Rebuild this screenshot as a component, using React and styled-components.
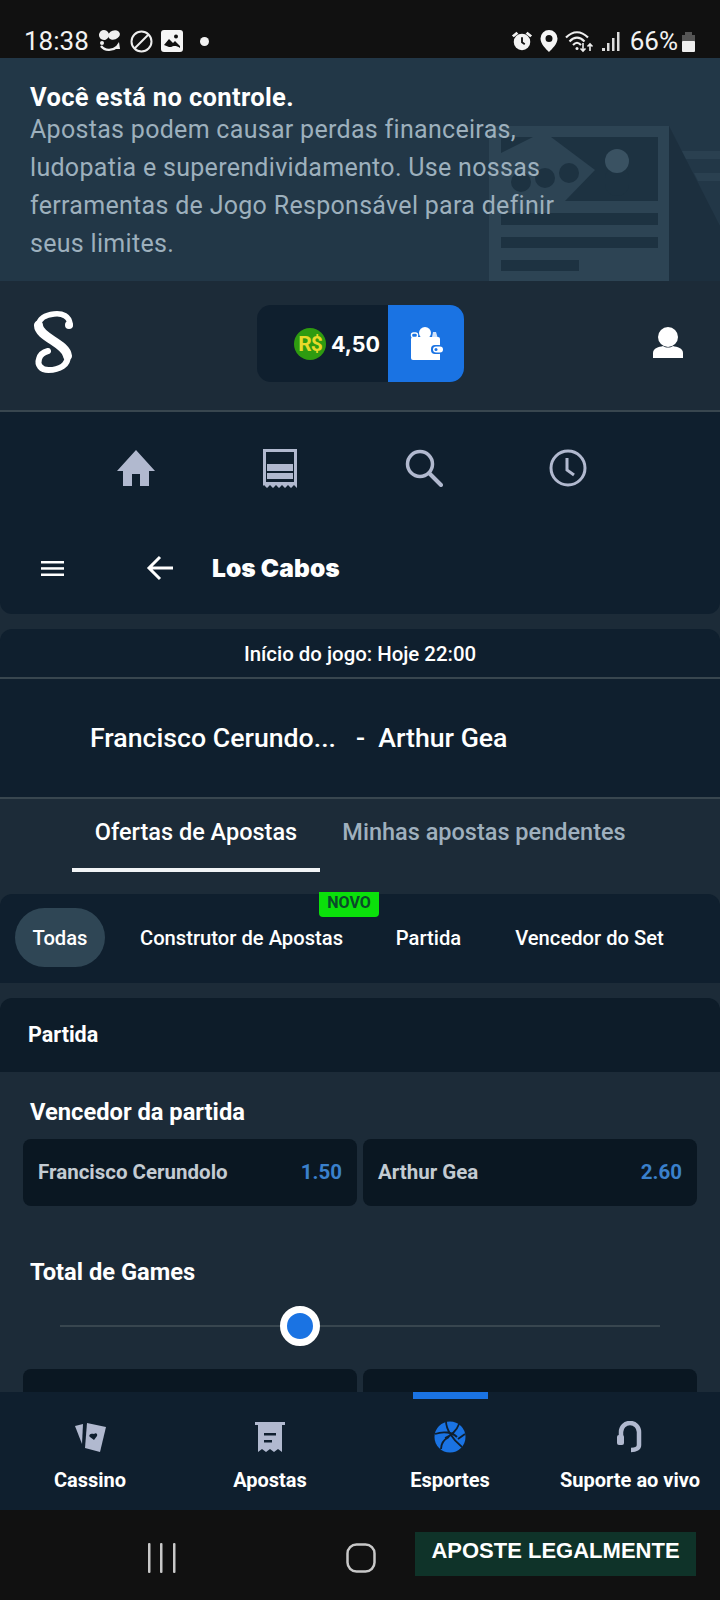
import React from "react";
import styled, { createGlobalStyle } from "styled-components";

const Global = createGlobalStyle`
  html, body { margin: 0; padding: 0; background: #111; }
  * { box-sizing: border-box; }
`;
const FONT = `"Roboto", "Noto Sans", sans-serif`;
const Page = styled.div`
  width: 720px; height: 1600px; overflow: hidden; display: flex; flex-direction: column;
  background: #1c2b38; font-family: ${FONT}; color: #fff;
`;
const StatusBar = styled.div`
  height: 58px; flex: none; background: #111; display: flex; align-items: center; justify-content: space-between;
  padding: 24px 24px 0 24px; font-family: "Roboto", sans-serif; font-size: 26px; color: #f2f2f2;
`;
const StatusGroup = styled.div`
  display: flex; align-items: center; gap: ${p => p.$gap || 6}px;
`;
const Dot = styled.span`
  margin-left: 9px; width: 9px; height: 9px; border-radius: 50%; background: #f2f2f2;
`;
const Percent = styled.span`
  margin-left: 3px; margin-right: -3px;
`;
const Banner = styled.div`
  position: relative; height: 223px; flex: none; background: #223747; padding: 23px 30px 0; overflow: hidden;
`;
const BannerArt = styled.svg`
  position: absolute; left: 480px; top: 3px;
`;
const BannerTitle = styled.div`
  position: relative; font-size: 25.5px; font-weight: 700; line-height: 32px; letter-spacing: 0.35px;
`;
const BannerText = styled.div`
  position: relative; font-size: 25px; line-height: 38px; letter-spacing: 0.3px; color: #9db0bd; width: 600px; margin-top: -2px; white-space: pre-line;
`;
const Header = styled.div`
  height: 131px; flex: none; display: flex; align-items: flex-start; justify-content: space-between;
  padding: 24px 36px 0 34px; border-bottom: 2px solid #38464f;
`;
const LogoSlot = styled.div`
  padding-top: 6px; height: 68px;
`;
const Balance = styled.div`
  width: 207px; height: 77px; margin-left: -5px; background: #0f1f2e; border-radius: 14px; display: flex; justify-content: flex-end; overflow: hidden;
`;
const BalanceValue = styled.div`
  display: flex; align-items: center; gap: 5px; padding-right: 8px; font-family: "Inter", sans-serif; font-weight: 700; font-size: 21.5px;
`;
const WalletButton = styled.div`
  width: 76px; background: #1a73e3; display: flex; align-items: center; justify-content: center;
`;
const UserSlot = styled.div`
  padding-top: 22px;
`;
const TopNav = styled.div`
  height: 110px; flex: none; background: #0f1f2e; display: grid; grid-template-columns: repeat(4, 144px); justify-content: center; align-items: center; padding: 0 17px 0 0;
`;
const NavCell = styled.div`
  display: flex; justify-content: center; padding-top: 2px;
`;
const SubHeader = styled.div`
  height: 92px; flex: none; background: #0f1f2e; border-radius: 0 0 12px 12px; display: flex; align-items: center; padding: 0 0 0 41px;
`;
const BackSlot = styled.div`
  margin-left: 82px; width: 66px; display: flex;
`;
const SubTitle = styled.div`
  font-family: "Inter", sans-serif; font-weight: 900; font-size: 24.5px; letter-spacing: 0.1px;
`;
const MatchCard = styled.div`
  margin-top: 15px; flex: none; background: #0f1f2e; border-radius: 12px 12px 0 0; border-bottom: 2px solid #38464f;
`;
const KickOff = styled.div`
  height: 50px; padding-top: 1px; display: flex; align-items: center; justify-content: center; font-size: 20.4px; font-weight: 500; border-bottom: 2px solid #38464f;
`;
const Teams = styled.div`
  height: 118px; display: flex; align-items: center; padding-left: 90px; font-size: 26.7px; font-weight: 500; white-space: pre;
`;
const Tabs = styled.div`
  height: 95px; flex: none; display: flex; padding-left: 72px;
`;
const Tab = styled.div`
  width: ${p => p.$w}px; height: 73px; padding-top: 19px; text-align: center; font-size: 23.5px; font-weight: 500;
  color: ${p => p.$active ? "#fff" : "#9fb0be"}; border-bottom: ${p => p.$active ? "4px solid #f1f4f6" : "none"};
`;
const Filters = styled.div`
  position: relative; height: 89px; flex: none; background: #0f1f2e; border-radius: 12px 12px 0 0; display: flex; align-items: center; padding: 0 0 0 15px; font-size: 20.2px; font-weight: 500;
`;
const Chip = styled.div`
  width: ${p => p.$w}px; height: 59px; margin-top: -2px; margin-left: ${p => p.$gap || 0}px; flex: none; border-radius: 30px; background: ${p => p.$active ? "#2f4655" : "transparent"};
  display: flex; align-items: center; justify-content: center; white-space: nowrap;
`;
const Novo = styled.div`
  position: absolute; left: 319px; top: -2px; width: 60px; height: 25px; background: #0be00b; border-radius: 0 0 4px 4px; color: #0a4a2a; font-size: 16px; font-weight: 700; text-align: center; line-height: 21px;
`;
const SectionHead = styled.div`
  margin-top: 15px; height: 74px; flex: none; background: #0d1c29; border-radius: 12px 12px 0 0; display: flex; align-items: center; padding: 0 0 2px 28px; font-size: 21.5px; font-weight: 700;
`;
const Content = styled.div`
  flex: 1; min-height: 0; overflow: hidden; display: flex; flex-direction: column;
`;
const MarketTitle = styled.div`
  padding-left: 30px; margin-top: ${p => p.$top}px; height: 30px; line-height: 30px; flex: none; font-size: 23.7px; font-weight: 700;
`;
const OddsRow = styled.div`
  margin: ${p => p.$top}px 23px 0 23px; display: grid; grid-template-columns: 1fr 1fr; gap: 6px; flex: none;
`;
const OddButton = styled.div`
  height: 67px; background: #0a1722; border-radius: 8px; display: flex; align-items: center; justify-content: space-between; padding: 0 15px 2px; font-size: 20.5px; font-weight: 700; color: #c3cbd2;
`;
const Price = styled.span`
  color: #3a80cb;
`;
const Slider = styled.div`
  position: relative; margin: 19px 60px 0; height: 40px; flex: none; display: flex; align-items: center;
`;
const Track = styled.div`
  flex: 1; height: 2px; background: #38464f;
`;
const Thumb = styled.div`
  position: absolute; left: 220px; top: 0; width: 40px; height: 40px; border-radius: 50%; background: #1a73e3; border: 7px solid #fff;
`;
const BottomNav = styled.div`
  position: relative; height: 118px; flex: none; background: #0f1f2e; display: grid; grid-template-columns: repeat(4, 180px);
`;
const BottomItem = styled.div`
  position: relative; display: flex; flex-direction: column; align-items: center; padding-top: 25px; font-size: 20px; font-weight: 700;
`;
const IconBox = styled.div`
  height: 40px; display: flex; align-items: center;
`;
const BottomLabel = styled.div`
  margin-top: 11px; line-height: 24px; white-space: nowrap;
`;
const ActiveBar = styled.div`
  position: absolute; top: 0; left: 53px; width: 75px; height: 7px; background: #1a73e3;
`;
const SystemBar = styled.div`
  height: 90px; flex: none; background: #111; display: flex; align-items: flex-start; padding: 22px 24px 0 0;
`;
const SysIcons = styled.div`
  width: 391px; padding: 11px 0 0 147px; display: flex; gap: 170px; flex: none;
`;
const LegalBadge = styled.div`
  margin-left: 24px; width: 281px; height: 44px; background: #0f3329; font-family: "Liberation Sans", sans-serif; font-weight: 700; font-size: 22px; color: #fff; text-align: center; line-height: 38px; white-space: nowrap;
`;

const C = "#b1b9cf";
const Alarm = () => <svg width="22" height="24" viewBox="0 0 24 24" fill="#f2f2f2"><circle cx="12" cy="13" r="9" /><path d="M1 6l5-4 2 2-5 4zM23 6l-5-4-2 2 5 4z" /><path d="M12 8v5.500l3 2" fill="none" stroke="#111" strokeWidth="2" /></svg>;
const Pin = () => <svg width="20" height="24" viewBox="0 0 20 24"><path fill="#f5f5f5" fillRule="evenodd" d="M10 1a8.500 8.500 0 0 1 8.500 8.500C18.500 15 13 20 10 23 7 20 1.500 15 1.500 9.500A8.500 8.500 0 0 1 10 1zm0 5a3.500 3.500 0 1 0 0 7 3.500 3.500 0 0 0 0-7z" /></svg>;
const Wifi = () => <svg width="30" height="24" viewBox="0 0 30 24" fill="none" stroke="#eee" strokeWidth="2.200"><path d="M1 8.500c7-7 15-7 22 0M4.500 12.500c5-5 10-5 15 0M8 16c3-3 5-3 8 0" /><circle cx="12" cy="19.500" r="1.500" fill="#eee" stroke="none" /><path d="M18 14v8m-2.500-2.500L18 22l2.500-2.500M25 22v-7m-2.500 2.500L25 15l2.500 2.500" strokeWidth="1.600" /></svg>;
const Signal = () => <svg width="20" height="24" viewBox="0 0 20 24" fill="#ddd"><rect x="1" y="19" width="3" height="3" /><rect x="6" y="14" width="2.500" height="8" /><rect x="11" y="9" width="2.500" height="13" /><rect x="16" y="3" width="2.500" height="19" /></svg>;
const Battery = () => <svg width="15" height="24" viewBox="0 0 15 24"><path fill="#555" d="M4 3h7v3h3v8H1V6h3z" /><rect x="1" y="12" width="13" height="11" rx="1" fill="#eee" /></svg>;
const Bubbles = () => <svg width="25" height="24" viewBox="0 0 25 24" fill="#f0f0f0"><ellipse cx="7" cy="6" rx="5" ry="5" transform="rotate(25 7 6)" /><ellipse cx="17" cy="6" rx="6" ry="4.500" transform="rotate(-20 17 6)" /><circle cx="5" cy="14" r="2" /><path d="M4 17c4 5 11 5 16 1" fill="none" stroke="#f0f0f0" strokeWidth="2.400" /><path d="M22 13l1 7-6 0z" /></svg>;
const Blocked = () => <svg width="23" height="23" viewBox="0 0 23 23" fill="none" stroke="#eee" strokeWidth="2"><circle cx="11.500" cy="11.500" r="10" /><path d="M18.500 4.500l-14 14" /></svg>;
const Picture = () => <svg width="22" height="22" viewBox="0 0 22 22"><rect width="22" height="22" rx="3" fill="#f5f5f5" /><path fill="#111" d="M3 15l5-6 4 4 2-2 5 5v2c-4-3-7-2-9-1l-2 0z" /><circle cx="15" cy="6.500" r="2" fill="#111" /></svg>;

const Art = () => (
  <BannerArt width="240" height="220" viewBox="0 0 240 220">
    <path fill="#1c2f3e" d="M189 65l51 100v58H189z" />
    <path fill="#2a4050" d="M202 90h38v8h-34zM214 112h26v8h-22z" />
    <rect x="9" y="65" width="180" height="158" fill="#2d4454" />
    <rect x="21" y="76" width="157" height="64" fill="#1d3241" />
    <path fill="#2d4454" d="M21 92l32-16h18l44 33-30 31H21z" />
    <circle cx="41" cy="121" r="10" fill="#1d3241" />
    <circle cx="65" cy="117" r="10" fill="#1d3241" />
    <circle cx="89" cy="112" r="10" fill="#1d3241" />
    <rect x="125" y="105" width="24" height="30" rx="12" fill="#1d3241" />
    <circle cx="137" cy="100" r="12" fill="#3a5262" />
    <rect x="21" y="152" width="157" height="12" fill="#1d3241" />
    <rect x="21" y="176" width="157" height="11" fill="#1d3241" />
    <rect x="21" y="199" width="78" height="11" fill="#1d3241" />
  </BannerArt>
);
const Logo = () => <svg width="40" height="62" viewBox="0 0 40 62" fill="none" stroke="#fff" strokeLinecap="round"><path d="M36 14C36 5 28 2 20 3 11 4 5 8 4.500 14" strokeWidth="5.500" /><path d="M4.500 14C4 26 32 32 33.500 45" strokeWidth="9" /><path d="M33.500 45c1 9-8 14-19 14C7 59 3 54 5 48c1-4 5-7 9-8" strokeWidth="6" /><circle cx="35" cy="14" r="4" fill="#fff" stroke="none" /></svg>;
const Coin = () => <svg width="32" height="32" viewBox="0 0 32 32"><circle cx="16" cy="16" r="16" fill="#2e9b10" /><text x="16" y="23" textAnchor="middle" fontFamily="Roboto, sans-serif" fontSize="21" letterSpacing="-1" fill="#e8d92a">R$</text></svg>;
const Wallet = () => <svg width="33" height="33" viewBox="0 0 33 33" fill="#fff"><circle cx="15" cy="6" r="6" /><rect x="1.500" y="6" width="6" height="4.500" rx="2" fill="none" stroke="#fff" strokeWidth="1.400" /><path d="M23 5l3 0 1.500 5H22z" opacity=".8" /><path d="M3 10h25a2 2 0 0 1 2 2v21H3a2 2 0 0 1-2-2V12a2 2 0 0 1 2-2z" /><rect x="21" y="18" width="12" height="9" rx="4" fill="#1a73e3" /><rect x="23" y="19.500" width="10" height="6" rx="3" /><circle cx="26" cy="22.500" r="1.500" fill="#1a73e3" /></svg>;
const User = () => <svg width="32" height="31" viewBox="0 0 32 31" fill="#fff"><ellipse cx="16" cy="10" rx="10" ry="10" /><path d="M1 31v-5c0-5 6-6 10-7 3 2 7 2 10 0 4 1 10 2 10 7v5z" /></svg>;
const Home = () => <svg width="38" height="36" viewBox="0 0 38 36" fill={C}><path d="M19 0L0 21h6v15h9V24h8v12h9V21h6z" /></svg>;
const Receipt = () => <svg width="36" height="39" viewBox="0 0 36 39" fill={C}><path fillRule="evenodd" d="M1 0h34v39l-3-3-3 3-3-3-3 3-3-3-3 3-3-3-3 3-3-3-3 3-3-3-1 1zm3 3v30h28V3z" /><rect x="5" y="15" width="26" height="7" /><rect x="5" y="24" width="26" height="6" /></svg>;
const Search = () => <svg width="38" height="38" viewBox="0 0 38 38" fill="none" stroke={C} strokeWidth="3.500" strokeLinecap="round"><circle cx="15" cy="15" r="12.500" /><path d="M25 25l11 11" strokeWidth="4" /></svg>;
const Clock = () => <svg width="38" height="38" viewBox="0 0 38 38" fill="none" stroke={C} strokeWidth="3"><circle cx="19" cy="19" r="17" /><path d="M18 9v12l7 5" /></svg>;
const Menu = () => <svg width="23" height="15" viewBox="0 0 23 15" fill="#fff"><rect width="23" height="2.500" /><rect y="6.200" width="23" height="2.500" /><rect y="12.500" width="23" height="2.500" /></svg>;
const Back = () => <svg width="27" height="26" viewBox="0 0 27 26" fill="none" stroke="#fff" strokeWidth="3"><path d="M14 2L3 13l11 11M3 13h24" /></svg>;
const Cards = () => <svg width="32" height="30" viewBox="0 0 32 30" fill={C}><path d="M1 4l8-2-1 20z" /><path d="M13 1l19 4-6 25-15-4z" /><path fill="#0f1f2e" d="M20 12c2-2 4 0 3 2l-3 4-4-3c-2-2 1-4 4-3z" /></svg>;
const Ticket = () => <svg width="30" height="30" viewBox="0 0 30 30" fill={C}><rect width="30" height="3" /><path fillRule="evenodd" d="M3 3h24v27l-4-3-4 3-4-3-4 3-4-3-4 3zm6 8v2.500h12V11zm0 7v2.500h8V18z" /></svg>;
const Ball = () => <svg width="32" height="32" viewBox="0 0 32 32" fill="#1a73e3" stroke="#0f1f2e" strokeWidth="1.800"><circle cx="16" cy="16" r="15.500" stroke="none" /><path fill="none" d="M12 0c0 8 6 18 16 26M1 13c8-3 17-2 22 3M25 3c-2 6-8 12-14 14M7 28c0-6 4-10 8-12M31 13l-7 5" /></svg>;
const Headset = () => <svg width="26" height="32" viewBox="0 0 26 32" fill="none" stroke={C} strokeWidth="4.500"><path d="M4 17v-6a9 9 0 0 1 18 0v13c0 3-3 5-8 5" /><rect x="0" y="14" width="7" height="10" rx="2" fill={C} stroke="none" /></svg>;
const Recents = () => <svg width="29" height="30" viewBox="0 0 29 30" fill="#c8c8c8"><rect x="1" width="2.500" height="30" rx="1" /><rect x="13" width="2.500" height="30" rx="1" /><rect x="26" width="2.500" height="30" rx="1" /></svg>;
const HomeSys = () => <svg width="30" height="30" viewBox="0 0 30 30" fill="none" stroke="#c8c8c8" strokeWidth="2.500"><rect x="1.500" y="1.500" width="27" height="27" rx="9" /></svg>;

export default function App() {
  return (
    <Page>
      <Global />
      <StatusBar>
        <StatusGroup $gap={8}>
          <span>18:38</span><Bubbles /><Blocked /><Picture />
          <Dot />
        </StatusGroup>
        <StatusGroup $gap={6}>
          <Alarm /><Pin /><Wifi /><Signal /><Percent>66%</Percent><Battery />
        </StatusGroup>
      </StatusBar>
      <Banner>
        <Art />
        <BannerTitle>Você está no controle.</BannerTitle>
        <BannerText>{"Apostas podem causar perdas financeiras,\nludopatia e superendividamento. Use nossas\nferramentas de Jogo Responsável para definir\nseus limites."}</BannerText>
      </Banner>
      <Header>
        <LogoSlot><Logo /></LogoSlot>
        <Balance>
          <BalanceValue><Coin />4,50</BalanceValue>
          <WalletButton><Wallet /></WalletButton>
        </Balance>
        <UserSlot><User /></UserSlot>
      </Header>
      <TopNav>
        <NavCell><Home /></NavCell>
        <NavCell><Receipt /></NavCell>
        <NavCell><Search /></NavCell>
        <NavCell><Clock /></NavCell>
      </TopNav>
      <Content>
        <SubHeader>
          <Menu />
          <BackSlot><Back /></BackSlot>
          <SubTitle>Los Cabos</SubTitle>
        </SubHeader>
        <MatchCard>
          <KickOff>Início do jogo: Hoje 22:00</KickOff>
          <Teams>{"Francisco Cerundo...   -  Arthur Gea"}</Teams>
        </MatchCard>
        <Tabs>
          <Tab $w={248} $active>Ofertas de Apostas</Tab>
          <Tab $w={328}>Minhas apostas pendentes</Tab>
        </Tabs>
        <Filters>
          <Novo>NOVO</Novo>
          <Chip $w={90} $active>Todas</Chip>
          <Chip $w={203} $gap={35}>Construtor de Apostas</Chip>
          <Chip $w={63} $gap={54}>Partida</Chip>
          <Chip $w={151} $gap={54}>Vencedor do Set</Chip>
        </Filters>
        <SectionHead>Partida</SectionHead>
        <MarketTitle $top={25}>Vencedor da partida</MarketTitle>
        <OddsRow $top={12}>
          <OddButton>Francisco Cerundolo<Price>1.50</Price></OddButton>
          <OddButton>Arthur Gea<Price>2.60</Price></OddButton>
        </OddsRow>
        <MarketTitle $top={51}>Total de Games</MarketTitle>
        <Slider><Track /><Thumb /></Slider>
        <OddsRow $top={23}>
          <OddButton />
          <OddButton />
        </OddsRow>
      </Content>
      <BottomNav>
        <BottomItem><IconBox><Cards /></IconBox><BottomLabel>Cassino</BottomLabel></BottomItem>
        <BottomItem><IconBox><Ticket /></IconBox><BottomLabel>Apostas</BottomLabel></BottomItem>
        <BottomItem><ActiveBar /><IconBox><Ball /></IconBox><BottomLabel>Esportes</BottomLabel></BottomItem>
        <BottomItem><IconBox><Headset /></IconBox><BottomLabel>Suporte ao vivo</BottomLabel></BottomItem>
      </BottomNav>
      <SystemBar>
        <SysIcons><Recents /><HomeSys /></SysIcons>
        <LegalBadge>APOSTE LEGALMENTE</LegalBadge>
      </SystemBar>
    </Page>
  );
}
